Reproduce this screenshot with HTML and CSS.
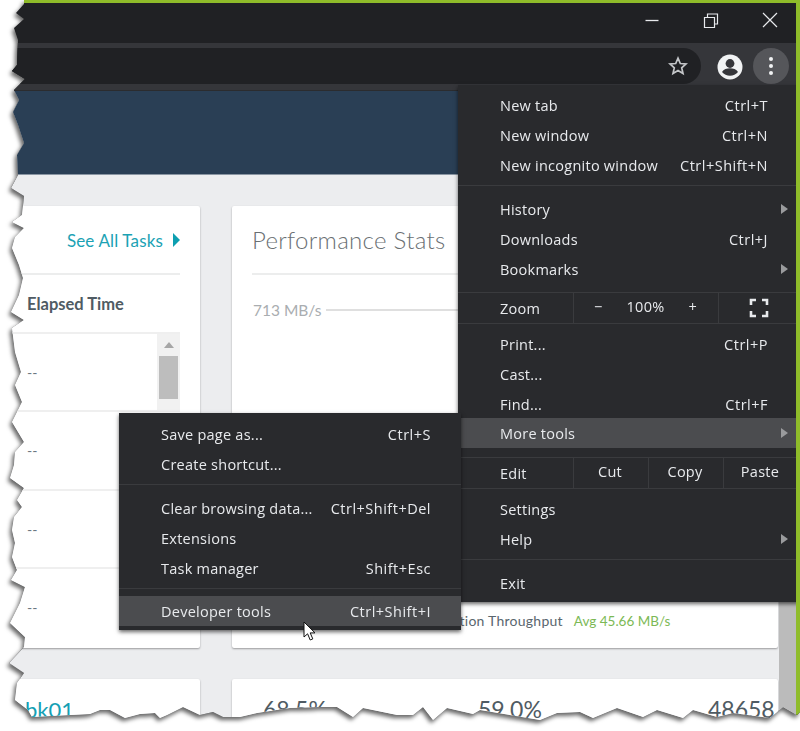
FILE: index.html
```html
<!DOCTYPE html>
<html lang="en">

<head>
  <meta charset="UTF-8">
  <title>Chrome menu - Developer tools</title>
  <link rel="stylesheet" href="styles.css">
</head>

<body>
  <div class="torn-shadow">
    <div class="window">
      <div class="titlebar">
        <svg class="win-btn" width="16" height="16" viewBox="0 0 16 16"><path d="M1.500 8.500h13" stroke="#e8eaed" stroke-width="1.300" fill="none"/></svg>
        <svg class="win-btn" width="16" height="16" viewBox="0 0 16 16"><path d="M1.500 5.500h10v10h-10zM4.500 5.500v-3.500h10v10h-3" stroke="#e8eaed" stroke-width="1.200" fill="none"/></svg>
        <svg class="win-btn" width="16" height="16" viewBox="0 0 16 16"><path d="M1 1l14 14M15 1l-14 14" stroke="#e8eaed" stroke-width="1.200" fill="none"/></svg>
      </div>
      <div class="toolbar">
        <div class="omnibox">
          <svg width="20" height="20" viewBox="0 0 20 20"><path d="M10 2.200l2.300 5.300 5.700.5-4.300 3.800 1.300 5.600-5-3-5 3 1.300-5.600-4.300-3.800 5.700-.5z" fill="none" stroke="#c4c6c9" stroke-width="1.700"/></svg>
        </div>
        <svg class="avatar" width="26" height="26" viewBox="0 0 26 26">
          <circle cx="13" cy="13" r="12.500" fill="#f1f3f4"/>
          <circle cx="13" cy="9.500" r="4.400" fill="#35363a"/>
          <path d="M5 18c1.500-2.800 5-3.800 8-3.800s6.500 1 8 3.800c-1.800 2.300-5 3.800-8 3.800s-6.200-1.500-8-3.800z" fill="#35363a"/>
        </svg>
        <div class="menu-btn"><i></i><i></i><i></i></div>
      </div>

      <div class="content">
        <div class="page">
          <div class="page-header"></div>
          <div class="cards">
            <section class="card tasks">
              <div class="card-head">
                <a class="see-all">See All Tasks</a>
                <span class="see-all-arrow"></span>
              </div>
              <div class="col-title">Elapsed Time</div>
              <div class="task-row">--
                <div class="mini-scroll"><span class="mini-up"></span><span class="mini-thumb"></span></div>
              </div>
              <div class="task-row">--</div>
              <div class="task-row">--</div>
              <div class="task-row">--</div>
            </section>
            <section class="card perf">
              <div class="card-head">
                <h2>Performance Stats</h2>
              </div>
              <div class="chart-label"><span>713 MB/s</span><span class="chart-line"></span></div>
              <div class="throughput">
                <span>Replication Throughput</span>
                <span class="avg">Avg 45.66 MB/s</span>
              </div>
            </section>
            <section class="card name-card">
              <a class="vol-name">bk01</a>
            </section>
            <section class="card stats-card">
              <span>68.5%</span>
              <span>59.0%</span>
              <span>48658</span>
            </section>
          </div>
        </div>
        <div class="page-scroll"></div>
      </div>

      <div class="menu main-menu">
        <div class="item"><span>New tab</span><kbd>Ctrl+T</kbd></div>
        <div class="item"><span>New window</span><kbd>Ctrl+N</kbd></div>
        <div class="item"><span>New incognito window</span><kbd>Ctrl+Shift+N</kbd></div>
        <div class="sep"></div>
        <div class="item sub"><span>History</span></div>
        <div class="item"><span>Downloads</span><kbd>Ctrl+J</kbd></div>
        <div class="item sub"><span>Bookmarks</span></div>
        <div class="split zoom-row">
          <span class="split-label">Zoom</span>
          <div class="zoom-controls"><span>&minus;</span><span>100%</span><span>+</span></div>
          <div class="zoom-full">
            <svg width="20" height="20" viewBox="0 0 20 20"><path d="M2 7v-5h5M13 2h5v5M18 13v5h-5M7 18h-5v-5" fill="none" stroke="#e8eaed" stroke-width="2.600"/></svg>
          </div>
        </div>
        <div class="item"><span>Print...</span><kbd>Ctrl+P</kbd></div>
        <div class="item"><span>Cast...</span></div>
        <div class="item"><span>Find...</span><kbd>Ctrl+F</kbd></div>
        <div class="item sub active more-tools"><span>More tools</span></div>
        <div class="split edit-row">
          <span class="split-label">Edit</span>
          <span class="edit-btn">Cut</span>
          <span class="edit-btn">Copy</span>
          <span class="edit-btn">Paste</span>
        </div>
        <div class="item"><span>Settings</span></div>
        <div class="item sub"><span>Help</span></div>
        <div class="sep"></div>
        <div class="item"><span>Exit</span></div>
      </div>

      <div class="menu tools-menu">
        <div class="item"><span>Save page as...</span><kbd>Ctrl+S</kbd></div>
        <div class="item"><span>Create shortcut...</span></div>
        <div class="sep"></div>
        <div class="item"><span>Clear browsing data...</span><kbd>Ctrl+Shift+Del</kbd></div>
        <div class="item"><span>Extensions</span></div>
        <div class="item"><span>Task manager</span><kbd>Shift+Esc</kbd></div>
        <div class="sep dev-sep"></div>
        <div class="item active"><span>Developer tools</span><kbd>Ctrl+Shift+I</kbd></div>
      </div>

      <svg class="cursor" width="15" height="21" viewBox="0 0 15 21">
        <path d="M1 1v15l3.600-3.200 2.600 6.200 2.600-1.100-2.600-6h4.800z" fill="#fff" stroke="#111" stroke-width="1"/>
      </svg>
    </div>
  </div>
</body>

</html>
```

FILE: styles.css
```css
body {
  margin: 0;
  background: #fff;
  overflow: hidden;
}

/* the filter has to sit on a parent, a clipped element loses its own shadow */
.torn-shadow {
  width: 800px;
  height: 731px;
  filter: drop-shadow(-2px 3px 2px #666);
}

.window {
  position: relative;
  box-sizing: border-box;
  width: 800px;
  height: 731px;
  display: flex;
  flex-direction: column;
  overflow: hidden;
  border-top: 3px solid #8fbc2a;
  border-right: 4px solid #8fbc2a;
  background: #202124;
  font-family: "Open Sans", sans-serif;
  clip-path: polygon(24px 0, 24px 4px, 16px 13px, 24px 19px, 14px 28px, 18px 40px, 17px 65px, 12px 71px, 25px 79px, 14px 90px, 19px 100px, 13px 112px, 18px 125px, 24px 143px, 17px 155px, 18px 175px, 11px 188px, 24px 196px, 22px 215px, 12px 222px, 24px 228px, 15px 237px, 12px 248px, 19px 265px, 23px 278px, 19px 295px, 11px 312px, 24px 320px, 12px 328px, 15px 352px, 21px 372px, 15px 385px, 22px 402px, 12px 422px, 24px 442px, 15px 452px, 14px 465px, 10px 478px, 24px 488px, 17px 500px, 22px 507px, 14px 517px, 12px 530px, 15px 543px, 12px 557px, 17px 570px, 11px 580px, 25px 587px, 20px 603px, 10px 623px, 25px 637px, 24px 647px, 9px 663px, 24px 673px, 17px 683px, 15px 700px, 28px 710px, 32px 717px, 90px 714px, 100px 710px, 110px 710px, 125px 718px, 140px 714px, 155px 713px, 160px 718px, 167px 715px, 183px 707px, 200px 715px, 213px 712px, 223px 717px, 240px 717px, 257px 713px, 290px 708px, 320px 707px, 337px 707px, 353px 717px, 363px 708px, 397px 715px, 413px 715px, 423px 707px, 433px 720px, 447px 708px, 473px 714px, 480px 710px, 540px 720px, 557px 713px, 580px 712px, 593px 718px, 617px 708px, 643px 717px, 657px 710px, 683px 718px, 693px 710px, 717px 717px, 733px 713px, 770px 718px, 783px 707px, 797px 715px, 800px 712px, 800px 0);
}

.titlebar {
  height: 40px;
  flex: none;
  display: flex;
  justify-content: flex-end;
  align-items: flex-start;
  gap: 43px;
  padding: 9px 18px 0 0;
  box-sizing: border-box;
}

.toolbar {
  height: 48px;
  flex: none;
  display: flex;
  align-items: flex-start;
  background: #35363a;
  padding-top: 5px;
  box-sizing: border-box;
  border-bottom: 1px solid #2b2c2f;
}

.omnibox {
  width: 701px;
  height: 36px;
  flex: none;
  box-sizing: border-box;
  display: flex;
  justify-content: flex-end;
  align-items: center;
  padding-right: 13px;
  background: #202124;
  border-radius: 0 18px 18px 0;
}

.avatar {
  margin: 6px 0 0 16px;
  flex: none;
}

.menu-btn {
  width: 36px;
  height: 36px;
  margin-left: 10px;
  border-radius: 50%;
  background: #55565a;
  display: flex;
  flex-direction: column;
  align-items: center;
  justify-content: center;
  gap: 3px;
}

.menu-btn i {
  width: 4px;
  height: 4px;
  border-radius: 50%;
  background: #f1f3f4;
}

.content {
  flex: 1;
  min-height: 0;
  display: flex;
  background: #ecedef;
}

.page {
  flex: 1;
  min-width: 0;
}

.page-header {
  height: 83px;
  background: #2a3f55;
  border-bottom: 1px solid #8a96a3;
  width: 796px;
}

.page-scroll {
  width: 17px;
  margin-top: 84px;
  background: #bbbbbb;
  flex: none;
}

.cards {
  display: grid;
  grid-template-columns: 200px 546px;
  grid-template-rows: 442px 60px;
  gap: 31px 32px;
  padding-top: 31px;
  color: #4f5b63;
  font-family: Lato, sans-serif;
}

.card {
  background: #fff;
  border-radius: 2px;
  box-shadow: 0 1px 2px rgba(0, 0, 0, .35);
  min-width: 0;
}

.card-head {
  height: 69px;
  margin-right: 20px;
  box-sizing: border-box;
  display: flex;
  align-items: center;
  justify-content: flex-end;
  border-bottom: 2px solid #eceded;
}

.see-all {
  padding-top: 2px;
  font-size: 17px;
  color: #1ba2b4;
  letter-spacing: .15px;
}

.see-all-arrow {
  margin-left: 10px;
  border-left: 7px solid #0d9fb0;
  border-top: 7px solid transparent;
  border-bottom: 7px solid transparent;
}

.col-title {
  height: 57px;
  box-sizing: border-box;
  padding: 19px 0 0 27px;
  font-size: 16.500px;
  line-height: 20px;
  font-weight: 700;
}

.task-row {
  position: relative;
  box-sizing: border-box;
  height: 78.4px;
  margin-right: 20px;
  padding: 29px 0 0 27px;
  font-size: 14px;
  line-height: 20px;
  color: #6b7780;
  border-top: 2px solid #efefef;
}

.mini-scroll {
  position: absolute;
  top: 0;
  right: 0;
  width: 23px;
  height: 78px;
  background: #f1f1f1;
  display: flex;
  flex-direction: column;
  align-items: center;
}

.mini-up {
  margin-top: 8px;
  border-bottom: 6px solid #a6a6a6;
  border-left: 5px solid transparent;
  border-right: 5px solid transparent;
}

.mini-thumb {
  width: 19px;
  height: 43px;
  margin-top: 8px;
  background: #bdbdbd;
}

.perf .card-head {
  justify-content: flex-start;
  margin-left: 20px;
}

.perf h2 {
  margin: 0;
  font-size: 24px;
  font-weight: 300;
  color: #6a6f73;
  letter-spacing: .3px;
}

.chart-label {
  display: flex;
  align-items: center;
  gap: 4px;
  margin: 24px 0 0 21px;
  font-size: 15.500px;
  line-height: 22px;
  color: #a9adb0;
}

.chart-line {
  flex: 1;
  height: 2px;
  background: #dfdfdf;
}

.throughput {
  margin-top: 290px;
  padding-left: 182px;
  display: flex;
  gap: 11px;
  font-size: 14px;
  line-height: 20px;
  letter-spacing: .25px;
  color: #5a666e;
}

.avg {
  color: #7cb955;
  font-size: 13.500px;
  letter-spacing: 0;
}

.vol-name {
  display: block;
  padding: 17px 0 0 25px;
  font-size: 22px;
  line-height: 28px;
  color: #14a0b4;
}

.stats-card {
  display: grid;
  grid-template-columns: 215px 230px 1fr;
  padding: 16px 0 0 31px;
  font-size: 23px;
  line-height: 28px;
}

/* chrome menus, these float above the page */
.menu {
  position: absolute;
  box-sizing: border-box;
  width: 342px;
  background: #292a2d;
  color: #e8eaed;
  font-size: 14.500px;
  letter-spacing: .25px;
  box-shadow: 0 2px 4px rgba(0, 0, 0, .6);
}

.main-menu {
  left: 458px;
  top: 82px;
  height: 517px;
  padding: 5px 0 0;
}

.tools-menu {
  left: 119px;
  top: 410px;
  height: 217px;
  padding: 6px 0 0;
}

.item {
  position: relative;
  height: 30px;
  display: flex;
  align-items: center;
  justify-content: space-between;
  padding: 0 32px 0 42px;
}

.tools-menu .item {
  padding-right: 30px;
}

.item kbd {
  font: inherit;
  letter-spacing: .5px;
}

.item.active {
  background: #4b4c4f;
}

.item.sub::after {
  content: "";
  position: absolute;
  right: 12px;
  top: 10px;
  border-left: 7px solid #9a9b9d;
  border-top: 5px solid transparent;
  border-bottom: 5px solid transparent;
}

.more-tools {
  margin-top: -1px;
}

.sep {
  height: 1px;
  margin: 5px 0 8px;
  background: #3a3b3e;
}

.dev-sep {
  margin-bottom: 7px;
}

.split {
  box-sizing: border-box;
  height: 32px;
  display: flex;
  align-items: stretch;
  border-top: 1px solid #3a3b3e;
  border-bottom: 1px solid #3a3b3e;
}

.split-label {
  width: 73px;
  padding-left: 42px;
  line-height: 32px;
  box-sizing: content-box;
}

.zoom-row {
  margin: 8px 0 5px;
}

.edit-row {
  margin: 9px 0 5px;
}

.zoom-controls {
  width: 145px;
  display: flex;
  justify-content: space-between;
  padding: 0 21px 0 20px;
  box-sizing: border-box;
  line-height: 28px;
  border-left: 1px solid #3a3b3e;
}

.zoom-full {
  flex: 1;
  display: flex;
  align-items: center;
  padding-left: 30px;
  border-left: 1px solid #3a3b3e;
}

.edit-btn {
  width: 75px;
  flex: none;
  box-sizing: border-box;
  padding-right: 2px;
  text-align: center;
  line-height: 28px;
  border-left: 1px solid #3a3b3e;
}

.cursor {
  position: absolute;
  left: 303px;
  top: 618px;
}
```
